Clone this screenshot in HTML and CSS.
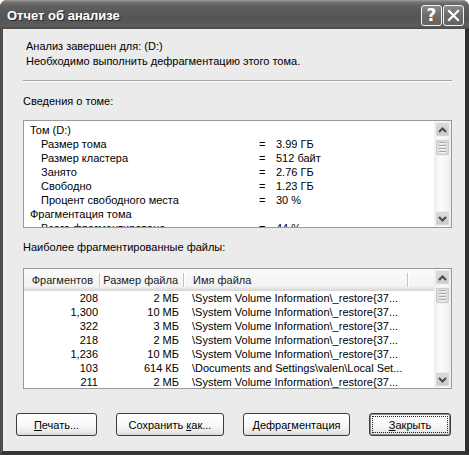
FILE: index.html
```html
<!DOCTYPE html>
<html>
<head>
<meta charset="utf-8">
<link rel="stylesheet" href="styles.css">
</head>
<body>
<div class="window">
  <div class="titlebar">
    <span class="title">Отчет об анализе</span>
    <div class="tbtns">
      <span class="tbtn help">?</span>
      <span class="tbtn close"><svg width="13" height="13" viewBox="0 0 13 13"><path d="M2 2 L11 11 M11 2 L2 11" stroke="#fff" stroke-width="2.2" stroke-linecap="square"/></svg></span>
    </div>
  </div>
  <div class="frame">
    <div class="client">
      <div class="intro">
        <div>Анализ завершен для: (D:)</div>
        <div>Необходимо выполнить дефрагментацию этого тома.</div>
      </div>
      <div class="sep"></div>
      <div class="label l1">Сведения о томе:</div>
      <div class="box vol">
        <div class="vol-content">
          <div class="vrow"><span class="k">Том (D:)</span></div>
          <div class="vrow"><span class="k ind">Размер тома</span><span class="eq">=</span><span class="v">3.99 ГБ</span></div>
          <div class="vrow"><span class="k ind">Размер кластера</span><span class="eq">=</span><span class="v">512 байт</span></div>
          <div class="vrow"><span class="k ind">Занято</span><span class="eq">=</span><span class="v">2.76 ГБ</span></div>
          <div class="vrow"><span class="k ind">Свободно</span><span class="eq">=</span><span class="v">1.23 ГБ</span></div>
          <div class="vrow"><span class="k ind">Процент свободного места</span><span class="eq">=</span><span class="v">30 %</span></div>
          <div class="vrow"><span class="k">Фрагментация тома</span></div>
          <div class="vrow"><span class="k ind">Всего фрагментировано</span><span class="eq">=</span><span class="v">44 %</span></div>
        </div>
        <div class="sbar">
          <div class="sbtn"><svg width="9" height="6" viewBox="0 0 9 6"><path d="M1 5 L4.5 1.5 L8 5" fill="none" stroke="#4a4a4a" stroke-width="2"/></svg></div>
          <div class="thumb"><i></i><i></i><i></i><i></i></div>
          <div class="track"></div>
          <div class="sbtn"><svg width="9" height="6" viewBox="0 0 9 6"><path d="M1 1 L4.5 4.5 L8 1" fill="none" stroke="#4a4a4a" stroke-width="2"/></svg></div>
        </div>
      </div>
      <div class="label l2">Наиболее фрагментированные файлы:</div>
      <div class="box files">
        <div class="files-content">
          <div class="hdr">
            <span class="h c1">Фрагментов</span>
            <span class="h c2">Размер файла</span>
            <span class="h c3">Имя файла</span>
            <span class="h c4"></span>
          </div>
          <div class="frow"><span class="c1">208</span><span class="c2">2 МБ</span><span class="c3">\System Volume Information\_restore{37...</span></div>
          <div class="frow"><span class="c1">1,300</span><span class="c2">10 МБ</span><span class="c3">\System Volume Information\_restore{37...</span></div>
          <div class="frow"><span class="c1">322</span><span class="c2">3 МБ</span><span class="c3">\System Volume Information\_restore{37...</span></div>
          <div class="frow"><span class="c1">218</span><span class="c2">2 МБ</span><span class="c3">\System Volume Information\_restore{37...</span></div>
          <div class="frow"><span class="c1">1,236</span><span class="c2">10 МБ</span><span class="c3">\System Volume Information\_restore{37...</span></div>
          <div class="frow"><span class="c1">103</span><span class="c2">614 КБ</span><span class="c3">\Documents and Settings\valen\Local Set...</span></div>
          <div class="frow"><span class="c1">211</span><span class="c2">2 МБ</span><span class="c3">\System Volume Information\_restore{37...</span></div>
        </div>
        <div class="sbar">
          <div class="sbtn"><svg width="9" height="6" viewBox="0 0 9 6"><path d="M1 5 L4.5 1.5 L8 5" fill="none" stroke="#4a4a4a" stroke-width="2"/></svg></div>
          <div class="thumb"><i></i><i></i><i></i><i></i></div>
          <div class="track"></div>
          <div class="sbtn"><svg width="9" height="6" viewBox="0 0 9 6"><path d="M1 1 L4.5 4.5 L8 1" fill="none" stroke="#4a4a4a" stroke-width="2"/></svg></div>
        </div>
      </div>
      <div class="buttons">
        <span class="btn b1"><span class="lbl"><u>П</u>ечать...</span></span>
        <span class="btn b2"><span class="lbl">Сохранить <u>к</u>ак...</span></span>
        <span class="btn b3"><span class="lbl">Дефра<u>г</u>ментация</span></span>
        <span class="btn b4 default"><span class="lbl"><u>З</u>акрыть</span></span>
      </div>
    </div>
  </div>
</div>
</body>
</html>
```

FILE: styles.css
```css
html, body {
  margin: 0;
  padding: 0;
  background: #ffffff;
}
body {
  width: 469px;
  height: 455px;
  overflow: hidden;
  font-family: "Liberation Sans", Arial, sans-serif;
  font-size: 11px;
  color: #000;
}
.window {
  width: 469px;
  height: 455px;
  display: flex;
  flex-direction: column;
  border-radius: 7px 7px 0 0;
  overflow: hidden;
  background: #3c3c3c;
}
.titlebar {
  height: 29px;
  flex: none;
  display: flex;
  align-items: center;
  justify-content: space-between;
  padding: 0 5px 0 7px;
  box-sizing: border-box;
  background: linear-gradient(to bottom, #a0a0a0 0px, #767676 2px, #626262 5px, #585858 12px, #555555 20px, #5c5c5c 26px, #4a4a4a 29px);
}
.title {
  color: #fff;
  font-family: "Liberation Sans", Arial, sans-serif;
  font-weight: bold;
  font-size: 13px;
  text-shadow: 1px 1px 0 #2a2a2a;
  padding-top: 1px;
}
.tbtns {
  display: flex;
  gap: 1px;
  padding-top: 2px;
}
.tbtn {
  width: 19px;
  height: 19px;
  border: 1px solid #f4f4f4;
  border-radius: 3px;
  background: linear-gradient(to bottom, #8a8a8a, #6c6c6c 50%, #626262);
  display: flex;
  align-items: center;
  justify-content: center;
  color: #fff;
  box-sizing: content-box;
}
.help {
  font-family: "DejaVu Sans", sans-serif;
  font-weight: bold;
  font-size: 17px;
  line-height: 19px;
}
.frame {
  flex: 1;
  display: flex;
  border-left: 3px solid #4e4e4e;
  border-right: 4px solid #2e2e2e;
  border-bottom: 4px solid #363636;
}
.client {
  flex: 1;
  background: #ebebeb;
  padding: 10px 13px 0 20px;
  display: flex;
  flex-direction: column;
}
.intro {
  padding-left: 3px;
  line-height: 15px;
}
.sep {
  margin-top: 11px;
  height: 0;
  border-top: 1px solid #a6a6a6;
  border-bottom: 1px solid #ffffff;
}
.label {
  line-height: 15px;
}
.l1 { margin-top: 12px; }
.l2 { margin-top: 12px; }
.box {
  border: 1px solid #9a9a9a;
  background: #fff;
  display: flex;
  overflow: hidden;
}
.vol {
  margin-top: 11px;
  height: 108px;
  box-sizing: border-box;
}
.vol-content {
  flex: 1;
  padding: 2px 0 0 6px;
  overflow: hidden;
}
.vrow {
  display: grid;
  grid-template-columns: 229px 17px auto;
  line-height: 14px;
  height: 14px;
  white-space: nowrap;
}
.k.ind {
  padding-left: 11px;
}
.eq {
  text-align: left;
}
.sbar {
  width: 17px;
  flex: none;
  padding: 1px;
  box-sizing: border-box;
  display: flex;
  flex-direction: column;
  background: linear-gradient(to right, #eeeeee, #fbfbfb 35%, #f7f7f7 70%, #ebebeb);
}
.sbtn {
  height: 15px;
  flex: none;
  border: 1px solid #f2f2f2;
  border-radius: 2px;
  background: linear-gradient(to bottom, #dcdcdc, #c9c9c9);
  box-shadow: inset 0 0 0 1px #d6d6d6;
  display: flex;
  align-items: center;
  justify-content: center;
  box-sizing: border-box;
}
.thumb {
  height: 17px;
  flex: none;
  margin-top: 2px;
  border: 1px solid #f2f2f2;
  border-radius: 2px;
  background: linear-gradient(to right, #d8d8d8, #e2e2e2 50%, #d6d6d6);
  box-shadow: inset 0 0 0 1px #cdcdcd;
  display: flex;
  flex-direction: column;
  align-items: center;
  justify-content: center;
  gap: 1px;
  box-sizing: border-box;
}
.thumb i {
  display: block;
  width: 7px;
  height: 1px;
  background: #a8a8a8;
  border-bottom: 1px solid #f4f4f4;
}
.track {
  flex: 1;
}
.files {
  margin-top: 13px;
  height: 121px;
  box-sizing: border-box;
}
.files-content {
  flex: 1;
  overflow: hidden;
}
.hdr {
  display: flex;
  height: 22px;
  box-sizing: border-box;
  background: linear-gradient(to bottom, #fbfbfb, #f2f2f2 80%, #e2e2e2 90%, #d4d4d4);
  align-items: center;
}
.h {
  position: relative;
  line-height: 14px;
  color: #1a1a1a;
  white-space: nowrap;
}
.h.c1, .h.c2, .h.c3 {
  border-right: 1px solid #c4c4c4;
  box-shadow: 1px 0 0 #ffffff;
}
.c1 { width: 76px; text-align: right; box-sizing: border-box; }
.c2 { width: 84px; text-align: right; box-sizing: border-box; }
.c3 { width: 224px; text-align: left; box-sizing: border-box; }
.h.c1 { padding-right: 6px; }
.h.c2 { padding-right: 5px; }
.h.c3 { padding-left: 9px; }
.h.c4 { flex: 1; }
.frow {
  display: flex;
  height: 14px;
  line-height: 14px;
  white-space: nowrap;
}
.frow .c1 { padding-right: 2px; }
.frow .c2 { padding-right: 5px; }
.frow .c3 { padding-left: 8px; overflow: hidden; }
.buttons {
  margin-top: 24px;
  margin-left: -7px;
  display: flex;
  gap: 19px;
}
.btn {
  position: relative;
  height: 23px;
  box-sizing: border-box;
  border: 1px solid #3c3c3c;
  border-radius: 3px;
  background: linear-gradient(to bottom, #ffffff, #f6f6f6 60%, #e6e6e6 90%, #d6d6d6);
  display: flex;
  align-items: center;
  justify-content: center;
  line-height: 14px;
  white-space: nowrap;
}
.lbl {
  white-space: pre;
}
.b1 { width: 81px; }
.b2 { width: 108px; }
.b3 { width: 107px; }
.b4 { width: 82px; }
.btn.default {
  box-shadow: inset 0 0 0 1px #8a8a8a;
}
.btn.default::after {
  content: "";
  position: absolute;
  left: 2px;
  right: 2px;
  top: 2px;
  bottom: 2px;
  border: 1px dotted #222;
}
u {
  text-decoration: underline;
  text-underline-offset: 1px;
}
```
